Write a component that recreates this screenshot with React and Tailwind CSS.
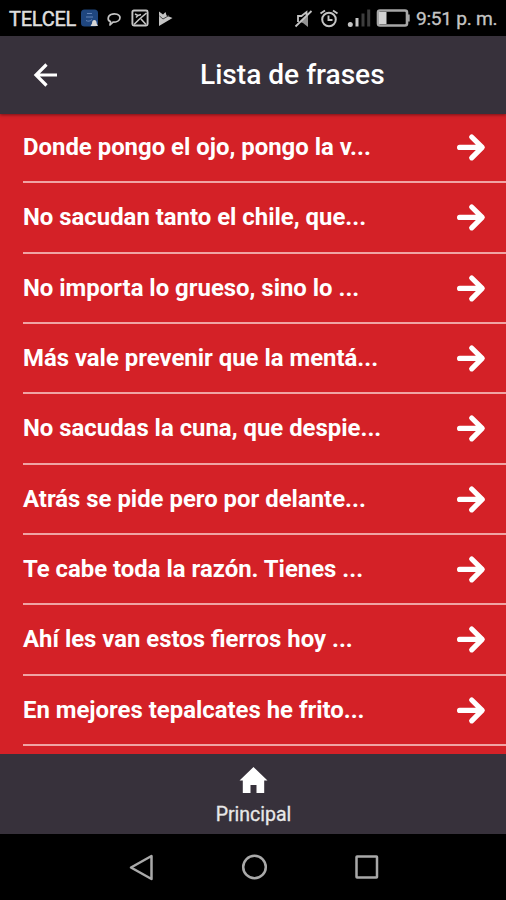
import React from "react";

const phrases = [
  "Donde pongo el ojo, pongo la v...",
  "No sacudan tanto el chile, que...",
  "No importa lo grueso, sino lo ...",
  "Más vale prevenir que la mentá...",
  "No sacudas la cuna, que despie...",
  "Atrás se pide pero por delante...",
  "Te cabe toda la razón. Tienes ...",
  "Ahí les van estos fierros hoy ...",
  "En mejores tepalcates he frito...",
];

function StatusBar() {
  return (
    <div className="flex h-9 shrink-0 items-center bg-black pl-[9px] pr-[9px] pt-[2px] text-[#c4c4c4]">
      <span className="w-[72px] whitespace-nowrap text-[20px] leading-8 tracking-[-0.25px] text-[#dedede] [-webkit-text-stroke:0.5px_#dedede]">TELCEL</span>
      <svg width="94" height="20" viewBox="0 0 94 20" fill="none">
        <rect x="0" y="0.500" width="17" height="17" rx="3.500" fill="#1f467f" />
        <path d="M6 4.500h5M5 8h7M5 11.500c2 1 4 1 6-1" stroke="#6484b8" />
        <path d="M9.500 17l1.500-2.500c0-2.500 1-3.500 2.300-3.500s2.400 1 2.400 3.500L17 17z" fill="#d6d6d6" />
        <path d="M29.500 12.500c-3.300-1-3-5.500.5-7 4-1.700 9 0 9 3.200 0 3-3.500 4.500-7 4.500L29 16z" stroke="currentColor" strokeWidth="1.700" strokeLinejoin="round" />
        <rect x="51.400" y="1.500" width="15.200" height="15" rx="1.500" stroke="currentColor" strokeWidth="1.900" />
        <path d="M53 15.500L58 10.500M58 10.500L65.500 4M60 10l5 5.500" stroke="currentColor" strokeWidth="1.600" />
        <path d="M54 5l3 1.500-2 2M57 6.500l3-1" stroke="currentColor" strokeWidth="1.500" />
        <path d="M78 2.500l4 3 2.500-2.500 1 3.500 6 2.500L78 17z" fill="currentColor" />
        <path d="M78.500 7l3.500 3 6-3.500" stroke="#444" />
      </svg>
      <svg className="ml-auto" width="122" height="20" viewBox="0 0 122 20" fill="none" stroke="currentColor">
        <path d="M6 13V7h3.500l5-4v4M3.500 17.500L19.500 2" strokeWidth="1.800" />
        <path d="M8 13l8-7.500v12.500l-5-4z" fill="currentColor" fillOpacity="0.75" stroke="none" />
        <circle cx="37" cy="10.500" r="6.800" strokeWidth="2" />
        <path d="M36.500 6.500V11h4M28.500 4.500l4.500-3M41 1.500l4.500 3" strokeWidth="1.900" />
        <circle cx="58.300" cy="15.500" r="2.500" fill="currentColor" stroke="none" />
        <path d="M65 9v8.500" strokeWidth="3" />
        <path d="M71 4.500v13M76.700 0.500v17" stroke="#3d3d3d" strokeWidth="3" />
        <rect x="86" y="1.500" width="29" height="15" rx="2" stroke="#a7a7a7" strokeWidth="2.600" />
        <path d="M87 3h7.500v12H87z" fill="#d2d2d2" stroke="none" />
        <path d="M116.700 5.500v7" stroke="#a7a7a7" strokeWidth="2" />
      </svg>
      <span className="ml-[2px] w-[81px] whitespace-nowrap text-[19.2px] leading-8 tracking-[-0.3px] [-webkit-text-stroke:0.3px_#c4c4c4]">9:51 p. m.</span>
    </div>
  );
}

function Phrase({ text }) {
  return (
    <li className="ml-[23px] flex h-[70.33px] shrink-0 items-center border-b-2 border-[#f0a4a4] pr-5">
      <span className="whitespace-nowrap text-[23.9px] font-bold leading-7">{text}</span>
      <svg className="ml-auto" width="30" height="30" viewBox="0 0 30 30" fill="none" stroke="white" strokeWidth="5.200" strokeLinecap="round" strokeLinejoin="round">
        <path d="M3.600 15.400h22M15.700 5L26.200 15.400 15.700 25.800" />
      </svg>
    </li>
  );
}

export default function App() {
  return (
    <div className="flex h-[900px] w-[506px] flex-col overflow-hidden bg-black font-['Roboto',sans-serif] text-white">
      <StatusBar />
      <header className="z-10 flex h-[78px] shrink-0 items-center bg-[#37313b] pl-[33px] shadow-[0_1px_3px_rgba(0,0,0,0.45)]">
        <svg width="26" height="26" viewBox="0 0 26 26" fill="none" stroke="white" strokeWidth="3.200">
          <path d="M24 13H4M13.500 2.500L3 13l10.500 10.500" />
        </svg>
        <h1 className="ml-[141px] whitespace-nowrap pb-px text-[28.1px] font-medium leading-8">Lista de frases</h1>
      </header>
      <main className="h-[640px] shrink-0 overflow-hidden bg-[#d42127]">
        <ul className="-mt-px flex flex-col">
          {phrases.map((text) => (
            <Phrase key={text} text={text} />
          ))}
        </ul>
      </main>
      <footer className="flex h-20 shrink-0 flex-col items-center bg-[#37313b] pt-[11px]">
        <svg width="30" height="30" viewBox="0 0 30 30" fill="white">
          <path d="M15.500 2L1.500 15.500h3.300V28h7.700v-8h6v8h7.700V15.500h3.300z" />
        </svg>
        <span className="mt-[8px] pl-px text-[19.500px] leading-6 text-[#e8e8e8] [-webkit-text-stroke:0.3px_#e8e8e8]">Principal</span>
      </footer>
      <nav className="flex flex-1 justify-center bg-black pt-[19px]">
        <svg width="256" height="28" viewBox="0 0 256 28" fill="none" stroke="#a9a9a9" strokeWidth="2.500">
          <path d="M26.500 3v23L6 14.500z" strokeLinejoin="round" />
          <circle cx="129.500" cy="14" r="11.300" />
          <rect x="231.500" y="3.500" width="20.500" height="21" rx="0.500" />
        </svg>
      </nav>
    </div>
  );
}
